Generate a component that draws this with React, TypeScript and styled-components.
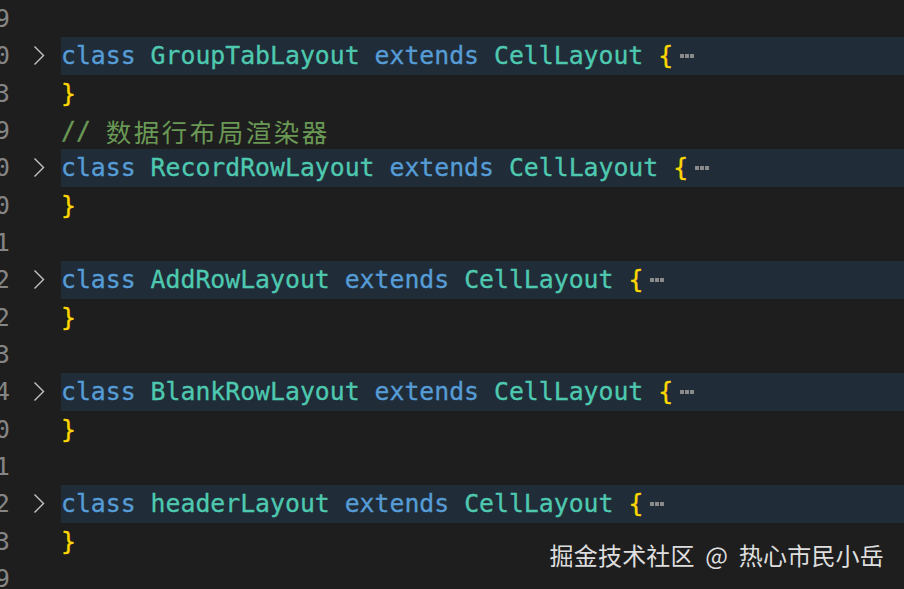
import React from "react";
import styled, { createGlobalStyle } from "styled-components";

const GlobalStyle = createGlobalStyle`
  html, body {
    margin: 0;
    padding: 0;
    background: #1e1e1e;
    overflow: hidden;
  }
  #root {
    width: 904px;
    height: 589px;
  }
`;

const Editor = styled.div`
  position: relative;
  width: 904px;
  height: 589px;
  background: #1e1e1e;
  overflow: hidden;
  display: flex;
  flex-direction: column;
  font-family: "DejaVu Sans Mono", "Liberation Mono", monospace;
  font-size: 24.8px;
`;

const Row = styled.div`
  display: grid;
  grid-template-columns: 10px 51px 1fr;
  height: 37.33px;
  flex: 0 0 37.33px;
  align-items: stretch;
`;

const LineNumber = styled.div`
  display: flex;
  justify-content: flex-end;
  align-items: center;
  white-space: nowrap;
  color: #858585;
`;

const FoldCell = styled.div`
  display: flex;
  align-items: center;
  padding-left: 23px;
  color: #c5c5c5;
`;

const Code = styled.div<{ $folded?: boolean }>`
  display: flex;
  align-items: center;
  white-space: pre;
  -webkit-text-stroke: 0.3px currentColor;
  background: ${(p) => (p.$folded ? "#202d39" : "transparent")};
`;

const colors: Record<string, string> = {
  kw: "#569cd6",
  cls: "#4ec9b0",
  brace: "#ffd700",
  comment: "#6a9955",
  plain: "#d4d4d4",
};

const Token = styled.span<{ $kind: string }>`
  color: ${(p) => colors[p.$kind]};
`;

const CjkComment = styled.span`
  display: inline-grid;
  grid-auto-flow: column;
  grid-auto-columns: 28px;
  color: #6a9955;
  font-family: "Noto Sans CJK SC", sans-serif;
  font-size: 25.5px;
  -webkit-text-stroke: 0;
`;

const Ellipsis = styled.span`
  display: inline-flex;
  gap: 1px;
  margin-left: 7px;
  align-self: center;
`;

const Dot = styled.span`
  width: 4px;
  height: 4px;
  background: #8a8a8a;
`;

const Watermark = styled.div`
  position: absolute;
  right: 20px;
  bottom: 19px;
  font-family: "Noto Sans CJK SC", "Noto Sans", sans-serif;
  font-size: 24px;
  line-height: 30px;
  color: #dedede;
  letter-spacing: 0.2px;
  word-spacing: 5px;
  white-space: pre;
`;

const Chevron = () => (
  <svg width="12" height="21" viewBox="0 0 12 21" fill="none">
    <path d="M1.5 1.5 L10.5 10.5 L1.5 19.5" stroke="currentColor" strokeWidth="1.4" />
  </svg>
);

type Line =
  | { n: string; kind: "empty" }
  | { n: string; kind: "close" }
  | { n: string; kind: "comment"; text: string }
  | { n: string; kind: "class"; name: string };

const lines: Line[] = [
  { n: "119", kind: "empty" },
  { n: "120", kind: "class", name: "GroupTabLayout" },
  { n: "183", kind: "close" },
  { n: "189", kind: "comment", text: "数据行布局渲染器" },
  { n: "190", kind: "class", name: "RecordRowLayout" },
  { n: "320", kind: "close" },
  { n: "321", kind: "empty" },
  { n: "322", kind: "class", name: "AddRowLayout" },
  { n: "372", kind: "close" },
  { n: "373", kind: "empty" },
  { n: "374", kind: "class", name: "BlankRowLayout" },
  { n: "400", kind: "close" },
  { n: "401", kind: "empty" },
  { n: "402", kind: "class", name: "headerLayout" },
  { n: "453", kind: "close" },
  { n: "459", kind: "empty" },
];

export default function App() {
  return (
    <>
      <GlobalStyle />
      <Editor>
        {lines.map((l, i) => (
          <Row key={i}>
            <LineNumber>{l.n}</LineNumber>
            <FoldCell>{l.kind === "class" ? <Chevron /> : null}</FoldCell>
            <Code $folded={l.kind === "class"}>
              {l.kind === "class" && (
                <>
                  <Token $kind="kw">class</Token>
                  <Token $kind="plain"> </Token>
                  <Token $kind="cls">{l.name}</Token>
                  <Token $kind="plain"> </Token>
                  <Token $kind="kw">extends</Token>
                  <Token $kind="plain"> </Token>
                  <Token $kind="cls">CellLayout</Token>
                  <Token $kind="plain"> </Token>
                  <Token $kind="brace">{"{"}</Token>
                  <Ellipsis>
                    <Dot />
                    <Dot />
                    <Dot />
                  </Ellipsis>
                </>
              )}
              {l.kind === "close" && <Token $kind="brace">{"}"}</Token>}
              {l.kind === "comment" && (
                <>
                  <Token $kind="comment">{"// "}</Token>
                  <CjkComment>
                    {Array.from(l.text).map((ch, k) => (
                      <span key={k}>{ch}</span>
                    ))}
                  </CjkComment>
                </>
              )}
            </Code>
          </Row>
        ))}
        <Watermark>掘金技术社区 @ 热心市民小岳</Watermark>
      </Editor>
    </>
  );
}
